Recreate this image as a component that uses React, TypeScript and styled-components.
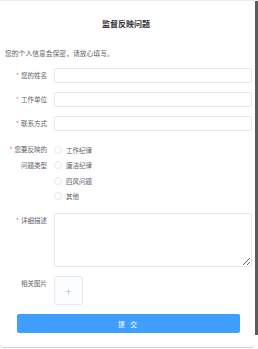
import styled, { createGlobalStyle } from 'styled-components'

const GlobalStyle = createGlobalStyle`
    body {
        margin: 0;
        background: #ffffff;
        font-family: "Noto Sans CJK SC", "Noto Sans", sans-serif;
    }
`

const Page = styled.div`
    position: relative;
    width: 258px;
    height: 349px;
    overflow: hidden;
    border-top: 1px solid #ededed;
    box-sizing: border-box;
`

const Card = styled.div`
    width: 254px;
    height: 347px;
    box-sizing: border-box;
    border-bottom: 1px solid #cfcfcf;
    border-radius: 0 0 4px 4px;
    background: #fff;
    padding: 15px 2px 0 0;
`

const ScrollThumb = styled.div`
    position: absolute;
    right: 0;
    top: 0;
    width: 3px;
    height: 334px;
    background: #5b5b5b;
`

const Title = styled.h1`
    margin: 0;
    text-align: center;
    font-size: 8px;
    line-height: 16px;
    font-weight: 700;
    color: #303133;
`

const Intro = styled.p`
    margin: 15px 0 0 5px;
    font-size: 6.8px;
    line-height: 12px;
    color: #606266;
`

const Form = styled.div`
    margin-top: 9px;
    display: flex;
    flex-direction: column;
`

const Row = styled.div<{ $gap?: number }>`
    display: flex;
    align-items: flex-start;
    margin-top: ${p => p.$gap ?? 9}px;
`

const Label = styled.label<{ $lh?: number }>`
    width: 54px;
    flex-shrink: 0;
    box-sizing: border-box;
    padding-right: 7px;
    text-align: right;
    font-size: 6.5px;
    line-height: ${p => p.$lh ?? 15}px;
    color: #606266;
`

const Star = styled.span`
    color: #f56c6c;
    margin-right: 2px;
`

const Input = styled.input`
    flex: 1;
    height: 15px;
    box-sizing: border-box;
    border: 1px solid #e4e7ed;
    border-radius: 2px;
    outline: none;
    padding: 0 5px;
    font-size: 7px;
`

const Checks = styled.div`
    display: flex;
    flex-direction: column;
`

const CheckItem = styled.label`
    display: flex;
    align-items: center;
    height: 15.5px;
    font-size: 6.5px;
    color: #606266;
`

const Circle = styled.span`
    width: 6px;
    height: 6px;
    border: 1px solid #e4e7ed;
    border-radius: 50%;
    margin-right: 4px;
`

const TextArea = styled.textarea`
    flex: 1;
    height: 54px;
    box-sizing: border-box;
    border: 1px solid #e4e7ed;
    border-radius: 2px;
    outline: none;
    padding: 3px 5px;
    font-size: 7px;
    resize: vertical;
`

const Upload = styled.div`
    width: 29px;
    height: 29px;
    box-sizing: border-box;
    border: 1px solid #e4e7ed;
    border-radius: 3px;
    background: #fbfdff;
    display: flex;
    align-items: center;
    justify-content: center;
    color: #b4b8bf;
    font-size: 11px;
    font-weight: 300;
`

const Submit = styled.button`
    margin: 9px 0 0 17px;
    width: 223px;
    height: 19px;
    border: none;
    border-radius: 2px;
    background: #409eff;
    color: #fff;
    font-family: inherit;
    font-size: 6.8px;
    letter-spacing: 2px;
`

const required = ['您的姓名', '工作单位', '联系方式']
const types = ['工作纪律', '廉洁纪律', '四风问题', '其他']

const App = () => {
    return (
        <>
            <GlobalStyle />
            <Page>
                <Card>
                    <Title>监督反映问题</Title>
                    <Intro>您的个人信息会保密，请放心填写。</Intro>
                    <Form>
                        {required.map((name, i) => (
                            <Row key={name} $gap={i === 0 ? 0 : 9}>
                                <Label><Star>*</Star>{name}</Label>
                                <Input />
                            </Row>
                        ))}
                        <Row $gap={11}>
                            <Label $lh={15.5}><Star>*</Star>您要反映的<br />问题类型</Label>
                            <Checks>
                                {types.map(t => (
                                    <CheckItem key={t}><Circle />{t}</CheckItem>
                                ))}
                            </Checks>
                        </Row>
                        <Row $gap={9}>
                            <Label><Star>*</Star>详细描述</Label>
                            <TextArea />
                        </Row>
                        <Row $gap={9}>
                            <Label>相关图片</Label>
                            <Upload>+</Upload>
                        </Row>
                        <Submit>提 交</Submit>
                    </Form>
                </Card>
                <ScrollThumb />
            </Page>
        </>
    )
}

export default App
